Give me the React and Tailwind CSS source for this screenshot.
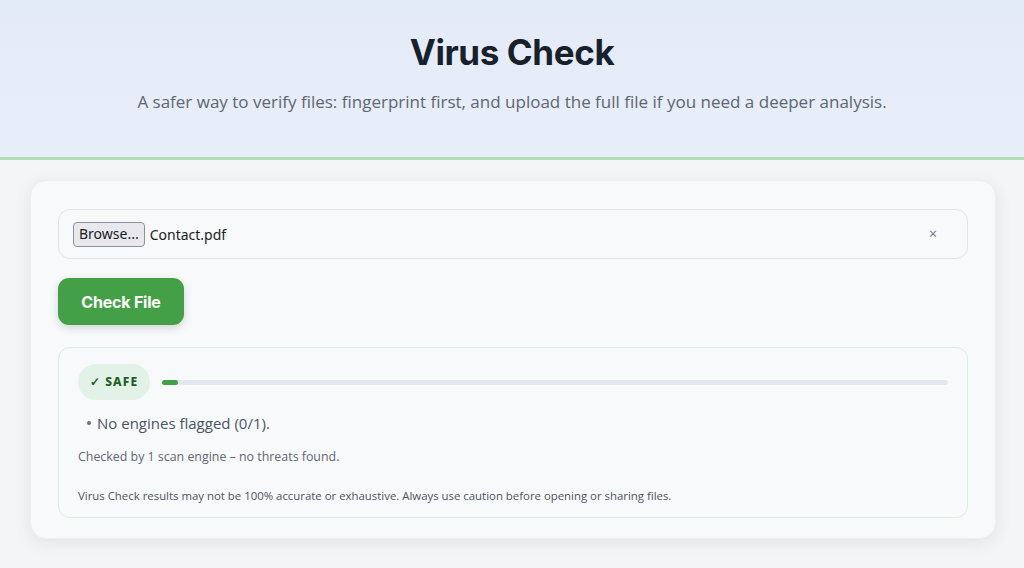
import { useState } from 'react';

const App = () => {
  const [fileName, setFileName] = useState('Contact.pdf');

  return (
    <div className="min-h-screen bg-[#f4f5f7] font-['Open_Sans',sans-serif]">
      <header className="bg-gradient-to-b from-[#e4ebf8] to-[#e8eef9] border-b-[3px] border-[#b5dbb7] pt-[31px] pb-[42px] text-center">
        <h1 className="font-['Inter',sans-serif] text-[35px] leading-[42px] font-bold tracking-[-0.4px] text-[#17212b]">
          Virus Check
        </h1>
        <p className="mt-[16px] text-[17px] leading-[26px] text-[#5d6671]">
          A safer way to verify files: fingerprint first, and upload the full file if you need a deeper analysis.
        </p>
      </header>

      <main className="pt-[20px] pl-[30px] pr-[28px] pb-[30px]">
        <div className="rounded-[16px] bg-[#f8f9fb] shadow-[0_4px_18px_rgba(0,0,0,0.08)] border border-[#eceef1] px-[27px] pt-[28px] pb-[20px]">
          <div className="flex items-center h-[50px] rounded-[12px] border border-[#e1e4e8] bg-[#f8f9fb] pl-[14px] pr-[30px]">
            <button className="h-[25px] px-[5px] rounded-[4px] border border-[#8f8f9d] bg-[#e9e9ed] text-[14px] text-[#1b1b1b] font-['Noto_Sans',sans-serif] leading-none">
              Browse...
            </button>
            <span className="ml-[5px] text-[14px] text-[#1b1b1b] font-['Noto_Sans',sans-serif]">{fileName}</span>
            <button
              onClick={() => setFileName('')}
              className="ml-auto text-[14px] text-[#6b7280] leading-none"
            >
              ×
            </button>
          </div>

          <button className="mt-[19px] h-[47px] w-[126px] rounded-[11px] bg-[#43a047] text-white font-['Inter',sans-serif] font-bold text-[16px] tracking-[-0.2px] shadow-[0_3px_8px_rgba(0,0,0,0.15)]">
            Check File
          </button>

          <div className="mt-[22px] rounded-[12px] border border-[#d9efdd] bg-[#f8f9fb] pl-[19px] pr-[19px] pt-[16px] pb-[13px]">
            <div className="flex items-center gap-[12px]">
              <span className="flex items-center justify-center h-[36px] w-[72px] rounded-full bg-[#e3f2e6] text-[#1e5e2b] text-[12px] font-extrabold tracking-[1.2px] font-['Noto_Sans',sans-serif]">
                ✓ SAFE
              </span>
              <div className="flex-1 h-[5px] rounded-full bg-[#e2e8f0]">
                <div className="h-full w-[16px] rounded-full bg-[#43a047]"></div>
              </div>
            </div>

            <ul className="mt-[13px] pl-[9px] text-[15px] leading-[20px] text-[#4b5563]">
              <li className="flex items-center gap-[6px]">
                <span className="h-[4px] w-[4px] rounded-full bg-[#6b7280]"></span>
                No engines flagged (0/1).
              </li>
            </ul>

            <p className="mt-[15px] text-[12.4px] leading-[18px] text-[#5f6873]">
              Checked by 1 scan engine – no threats found.
            </p>

            <p className="mt-[22px] text-[11.4px] leading-[16px] text-[#4b5563]">
              Virus Check results may not be 100% accurate or exhaustive. Always use caution before opening or sharing files.
            </p>
          </div>
        </div>
      </main>
    </div>
  );
};

export default App;
